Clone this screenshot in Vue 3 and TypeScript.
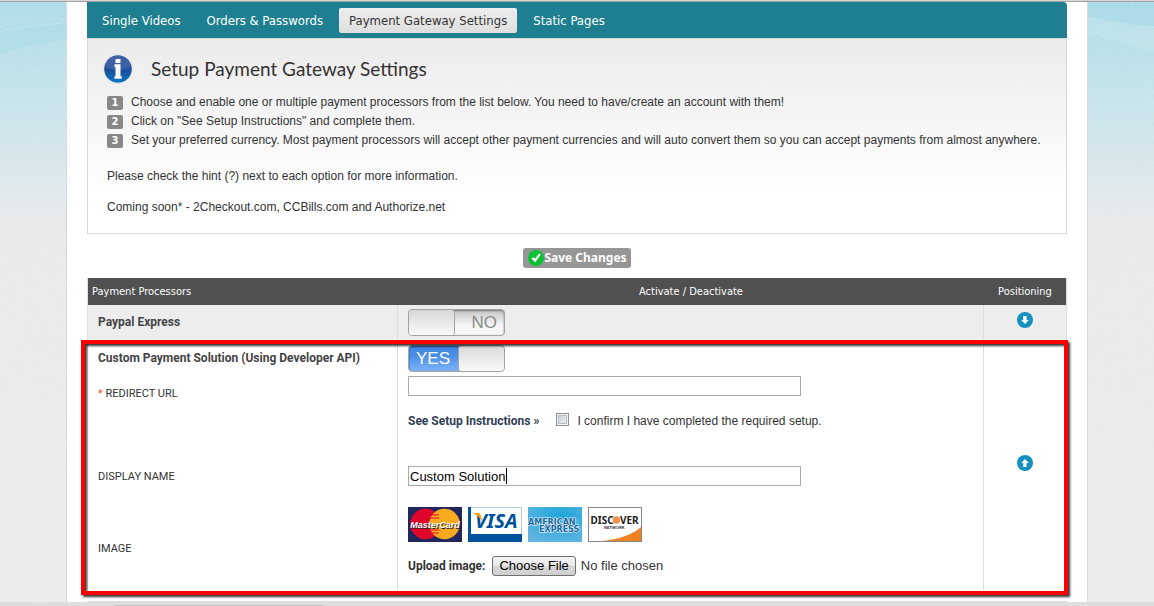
<script setup lang="ts">
import { ref } from 'vue'

const tabs = ['Single Videos', 'Orders & Passwords', 'Payment Gateway Settings', 'Static Pages']
const activeTab = ref('Payment Gateway Settings')

const steps = [
  'Choose and enable one or multiple payment processors from the list below. You need to have/create an account with them!',
  'Click on "See Setup Instructions" and complete them.',
  'Set your preferred currency. Most payment processors will accept other payment currencies and will auto convert them so you can accept payments from almost anywhere.',
]

const paypalEnabled = ref(false)
const customEnabled = ref(true)
const confirmed = ref(false)
const redirectUrl = ref('')
const displayName = ref('Custom Solution')
</script>

<template>
  <div class="screen">
    <svg class="backdrop" aria-hidden="true" width="100%" height="100%">
      <defs>
        <linearGradient id="sky" x1="0" y1="0" x2="0" y2="1">
          <stop offset="0" stop-color="#a9dbe7" />
          <stop offset="0.1" stop-color="#bbe0e9" />
          <stop offset="0.25" stop-color="#d2e5ea" />
          <stop offset="0.37" stop-color="#e9e9eb" />
          <stop offset="1" stop-color="#ebebeb" />
        </linearGradient>
        <filter id="grain" x="0" y="0" width="100%" height="100%">
          <feTurbulence type="fractalNoise" baseFrequency="0.6" numOctaves="2" />
          <feColorMatrix values="0 0 0 0 1  0 0 0 0 1  0 0 0 0 1  1.4 0 0 0 -0.45" />
        </filter>
      </defs>
      <rect width="100%" height="100%" fill="url(#sky)" />
      <path d="M0 28 Q34 22 67 19 V38 Q34 43 0 53Z" fill="#9fd8e3" opacity=".35" />
      <path d="M0 29 Q34 23 67 20 V22 Q34 25 0 31Z" fill="#fff" opacity=".15" />
      <svg x="100%" overflow="visible">
        <path d="M-67 15 Q-30 24 0 25 V50 Q-30 42 -67 33Z" fill="#fff" opacity=".12" />
        <path d="M-67 2 H0 V25 Q-30 24 -67 15Z" fill="#9fd8e6" opacity=".4" />
      </svg>
      <rect width="100%" height="100%" filter="url(#grain)" opacity=".25" />
    </svg>

    <main class="page">
      <nav class="tabs">
        <a
          v-for="tab in tabs"
          :key="tab"
          href="#"
          :class="{ active: tab === activeTab }"
          @click.prevent="activeTab = tab"
          >{{ tab }}</a
        >
      </nav>

      <section class="intro">
        <header>
          <svg class="info" viewBox="0 0 30 30" aria-hidden="true">
            <defs>
              <linearGradient id="blue" x1="0" y1="0" x2="0" y2="1">
                <stop offset="0" stop-color="#2b4d9a" />
                <stop offset="0.5" stop-color="#1a4a98" />
                <stop offset="1" stop-color="#0878c0" />
              </linearGradient>
            </defs>
            <circle cx="15" cy="15" r="14.7" fill="#fff" stroke="#d8d8d8" stroke-width=".6" />
            <circle cx="15" cy="15" r="13.8" fill="url(#blue)" />
            <path d="M2 11 A13.6 13.6 0 0 1 28 11 Q27 16 15 16 Q3 16 2 11Z" fill="#fff" opacity=".12" />
            <path d="M12.5 5h5v4h-5zM11.5 10.3h6v12h1.2v2.4h-7.2v-2.4h1v-9.4h-1z" fill="#fff" />
          </svg>
          <h1>Setup Payment Gateway Settings</h1>
        </header>
        <ol>
          <li v-for="(step, i) in steps" :key="i">
            <span class="num">{{ i + 1 }}</span>
            <span>{{ step }}</span>
          </li>
        </ol>
        <p>Please check the hint (?) next to each option for more information.</p>
        <p>Coming soon* - 2Checkout.com, CCBills.com and Authorize.net</p>
      </section>

      <div class="actions">
        <button type="button" class="save">
          <svg viewBox="0 0 16 16" aria-hidden="true">
            <circle cx="8" cy="8" r="8" fill="#0bc236" />
            <path d="M3.4 8.4 5.8 7.2 7 8.8 11 3.6 12.8 4.6 7.3 12.2Z" fill="#fff" />
          </svg>
          <span>Save Changes</span>
        </button>
      </div>

      <div class="processors">
        <table>
          <colgroup>
            <col class="col-name" />
            <col />
            <col class="col-pos" />
          </colgroup>
          <thead>
            <tr>
              <th class="first">Payment Processors</th>
              <th>Activate / Deactivate</th>
              <th>Positioning</th>
            </tr>
          </thead>
          <tbody>
            <tr class="shaded">
              <td class="name">Paypal Express</td>
              <td>
                <label class="switch" :class="{ on: paypalEnabled }">
                  <input v-model="paypalEnabled" type="checkbox" aria-label="Paypal Express" />
                  <span class="state">{{ paypalEnabled ? 'YES' : 'NO' }}</span>
                  <span class="knob"></span>
                </label>
              </td>
              <td class="pos">
                <button type="button" class="move" aria-label="Move down">
                  <svg viewBox="0 0 16 16"><circle cx="8" cy="8" r="8" fill="#1691bd" /><path d="M6.2 4h3.4v4h2.2L8 12 4.2 8h2z" fill="#fff" /></svg>
                </button>
              </td>
            </tr>
            <tr class="row-title">
              <td class="name">Custom Payment Solution (Using Developer API)</td>
              <td>
                <label class="switch" :class="{ on: customEnabled }">
                  <input v-model="customEnabled" type="checkbox" aria-label="Custom Payment Solution" />
                  <span class="state">{{ customEnabled ? 'YES' : 'NO' }}</span>
                  <span class="knob"></span>
                </label>
              </td>
              <td class="pos" rowspan="4">
                <button type="button" class="move" aria-label="Move up">
                  <svg viewBox="0 0 16 16"><circle cx="8" cy="8" r="8" fill="#1691bd" /><path d="M6.2 12h3.4V8h2.2L8 4 4.2 8h2z" fill="#fff" /></svg>
                </button>
              </td>
            </tr>
            <tr class="row-url">
              <td><label class="caption" for="redirect"><em>*</em> REDIRECT URL</label></td>
              <td>
                <input id="redirect" v-model="redirectUrl" class="text" type="text" />
                <div class="confirm">
                  <a href="#">See Setup Instructions »</a>
                  <input id="confirm" v-model="confirmed" type="checkbox" />
                  <label for="confirm">I confirm I have completed the required setup.</label>
                </div>
              </td>
            </tr>
            <tr class="row-display">
              <td><label class="caption" for="display">DISPLAY NAME</label></td>
              <td>
                <div class="field">
                  <input id="display" v-model="displayName" class="text" type="text" />
                  <span class="caret"></span>
                </div>
              </td>
            </tr>
            <tr class="row-image">
              <td><span class="caption">IMAGE</span></td>
              <td class="media">
                <div class="cards">
                  <svg viewBox="0 0 54 35" role="img" aria-label="MasterCard">
                    <rect width="54" height="35" fill="#22265f" />
                    <circle cx="17.5" cy="17" r="15.3" fill="#e0062b" />
                    <circle cx="36.5" cy="17" r="15.3" fill="#f9ab20" />
                    <path d="M23 8h8M22 11h9M22 23h9M23 26h8" stroke="#e0062b" stroke-width="1.2" />
                    <text x="3" y="21.6" class="mc-shadow">MasterCard</text>
                    <text x="2.2" y="21" class="mc">MasterCard</text>
                  </svg>
                  <svg viewBox="0 0 54 35" role="img" aria-label="Visa">
                    <rect x=".5" y=".5" width="53" height="34" fill="#fff" stroke="#b7c9dd" />
                    <path d="M0 0h3v27h51v8H0z" fill="#00529c" />
                    <text x="7" y="21" class="visa">VISA</text>
                    <path d="M5 6h5.5q2 .3 2.5 3l1.5 6Q11 9 5 6z" fill="#f9a01b" />
                  </svg>
                  <svg viewBox="0 0 54 35" role="img" aria-label="American Express">
                    <defs>
                      <radialGradient id="amex" cx=".6" cy=".3" r=".8">
                        <stop offset="0" stop-color="#1ba5da" />
                        <stop offset="1" stop-color="#64b5e2" />
                      </radialGradient>
                    </defs>
                    <rect width="54" height="35" fill="url(#amex)" />
                    <path d="M0 18V12H51V18M11 20H54V25H11Z" fill="#5fbce5" opacity=".6" />
                    <text x="0" y="17.5" class="amex">AMERICAN</text>
                    <text x="11" y="25" class="amex">EXPRESS</text>
                  </svg>
                  <svg viewBox="0 0 54 35" role="img" aria-label="Discover">
                    <rect x=".5" y=".5" width="53" height="34" fill="#fff" stroke="#85888b" />
                    <path d="M14 34Q41 31 53 20V34Z" fill="#f08122" />
                    <text x="2.5" y="16.5" class="disc">DISC</text>
                    <circle cx="28.5" cy="13" r="3.8" fill="#f6904a" />
                    <text x="32" y="16.5" class="disc">VER</text>
                    <text x="16" y="22" class="net">NETWORK</text>
                  </svg>
                </div>
                <div class="upload">
                  <label for="file">Upload image:</label>
                  <input id="file" type="file" />
                </div>
              </td>
            </tr>
          </tbody>
        </table>
        <div class="highlight"></div>
      </div>
      <hr />
    </main>
    <footer class="status"><span></span></footer>
  </div>
</template>

<style>
html,
body {
  margin: 0;
  background: #ebebeb;
}
</style>

<style scoped>
.screen {
  position: relative;
  display: flex;
  flex-direction: column;
  align-items: center;
  box-sizing: border-box;
  min-height: 100vh;
  border-top: 1px solid #d6d6d6;
  color: #333;
  font: 12px/19px 'Liberation Sans', Arial, sans-serif;
  overflow: hidden;
}
.screen::before {
  content: '';
  position: relative;
  z-index: 2;
  width: 100%;
  height: 1px;
  background: #a3a3a3;
}
.backdrop {
  position: absolute;
  inset: 0;
}
.page {
  position: relative;
  flex: 1;
  box-sizing: border-box;
  width: 100%;
  max-width: 1022px;
  padding: 0 20px;
  border: solid #d9dadb;
  border-width: 0 1px;
  background: #fff;
}
.tabs {
  display: flex;
  gap: 6px;
  align-items: center;
  height: 36px;
  padding: 0 5px;
  border-radius: 0 4px 0 0;
  background: #1d7f8f;
}
.tabs a {
  padding: 0 10px;
  border-radius: 2px;
  color: #fff;
  font: 13px/25px 'DejaVu Sans Condensed', 'DejaVu Sans', sans-serif;
  text-decoration: none;
}
.tabs a.active {
  background: linear-gradient(#eee, #dedede);
  color: #333;
}
.intro {
  box-sizing: border-box;
  min-height: 196px;
  padding: 13px 8px 16px 19px;
  border: 1px solid #d9d9d9;
  background: linear-gradient(#ebebeb, #fff 80%);
}
.intro header {
  display: flex;
  gap: 18px;
  align-items: center;
  margin-left: -4px;
}
.info {
  width: 30px;
  height: 30px;
}
h1 {
  margin: 0;
  font: 19px/34px Lato, 'Noto Sans', sans-serif;
}
ol {
  margin: 7px 0 17px;
  padding: 0;
  list-style: none;
}
li {
  display: flex;
  gap: 8px;
  align-items: center;
}
.num {
  width: 16px;
  border-radius: 2px;
  background: #888;
  color: #fff;
  font: bold 10px/14px 'DejaVu Sans', sans-serif;
  text-align: center;
}
.intro p {
  margin: 0;
}
.intro p + p {
  margin-top: 12px;
}
.actions {
  display: flex;
  justify-content: center;
  padding: 14px 0 10px;
}
.save {
  display: flex;
  align-items: center;
  height: 20px;
  padding: 0 4px 0 5px;
  border: 0;
  border-radius: 3px;
  background: #969696;
  color: #fff;
  font: bold 12px/20px 'Noto Sans', sans-serif;
}
.save svg {
  width: 16px;
  height: 16px;
}
.processors {
  position: relative;
}
table {
  width: 100%;
  border-collapse: separate;
  border-spacing: 0;
  table-layout: fixed;
  border: solid #ddd;
  border-width: 0 1px;
}
.col-name {
  width: 310px;
}
.col-pos {
  width: 82px;
}
th {
  height: 27px;
  padding: 0;
  background: #505050;
  color: #fff;
  font: 11px/27px 'DejaVu Sans Condensed', 'DejaVu Sans', sans-serif;
}
th.first {
  padding-left: 4px;
  text-align: left;
}
td {
  padding: 0 10px;
  border-right: 1px solid #ddd;
}
td.pos {
  padding: 0;
  border-right: 0;
  text-align: center;
}
.shaded td {
  height: 37px;
  padding-bottom: 2px;
  box-sizing: border-box;
  background: #ededed;
}
.name {
  color: #444;
  font-family: Roboto, sans-serif;
  font-weight: bold;
}
.row-title td {
  height: 32px;
}
.row-url td {
  height: 72px;
  vertical-align: top;
}
.row-url .caption {
  display: block;
  margin-top: 10px;
}
.row-display td {
  height: 60px;
}
.row-image td {
  height: 84px;
}
.row-image .media {
  vertical-align: top;
}
.caption {
  font: 11px/19px Roboto, sans-serif;
}
.caption em {
  color: #f4503c;
  font-style: normal;
}
.switch {
  position: relative;
  display: flex;
  justify-content: flex-end;
  align-items: center;
  box-sizing: border-box;
  width: 97px;
  height: 27px;
  padding: 0 7px;
  border: 1px solid #a2a2a2;
  border-radius: 4px;
  background: linear-gradient(#c4c4c4, #f6f6f6 60%);
  box-shadow: inset 0 1px 2px #777;
  color: #8b8b8b;
  font-size: 17px;
}
.switch input {
  position: absolute;
  inset: 0;
  margin: 0;
  opacity: 0;
}
.knob {
  position: absolute;
  top: 0;
  bottom: 0;
  left: 0;
  width: 45px;
  border-right: 1px solid #a5a5a5;
  border-radius: 3px;
  background: linear-gradient(#d8d8d8, #fafafa);
  pointer-events: none;
}
.switch.on {
  justify-content: flex-start;
  background: linear-gradient(#4384dc, #4b8fe6 40%, #7eb4fb);
  box-shadow: inset 0 1px 2px #255ca9;
  color: #fff;
}
.switch.on .knob {
  right: 0;
  left: auto;
  border-right: 0;
  border-left: 1px solid #a5a5a5;
}
.move {
  display: inline-block;
  width: 16px;
  height: 16px;
  padding: 0;
  border: 0;
  background: none;
  vertical-align: middle;
}
.move svg {
  display: block;
}
.shaded .move,
.row-title .move {
  margin-bottom: 6px;
}
.text {
  display: block;
  box-sizing: border-box;
  width: 393px;
  max-width: 100%;
  height: 20px;
  padding: 0 1px;
  border: 1px solid #a9a9ae;
  background: #fff;
  color: #000;
  font: 13px/18px 'Liberation Sans', Arial, sans-serif;
  outline: none;
}
.row-url .text {
  margin-top: 2px;
}
.field {
  position: relative;
}
.caret {
  position: absolute;
  top: 2px;
  left: 98px;
  width: 1px;
  height: 16px;
  background: #000;
}
.confirm {
  display: flex;
  align-items: center;
  margin-top: 16px;
}
.confirm a {
  color: #2f3f55;
  font-family: Roboto, sans-serif;
  font-weight: bold;
  text-decoration: none;
}
.confirm input {
  appearance: none;
  width: 13px;
  height: 13px;
  margin: 0 8px 4px 17px;
  border: 1px solid #8e8f8f;
  background: linear-gradient(135deg, #c5c9d0, #f4f4f4);
  box-shadow: inset 0 0 0 1px #f4f4f4, inset 0 0 0 2px #b8bcc4;
}
.confirm input:checked {
  background: #1d7f8f;
}
.cards {
  display: flex;
  gap: 6px;
  padding-top: 1px;
}
.cards svg {
  width: 54px;
  height: 35px;
}
.mc,
.mc-shadow {
  font: italic bold 9px 'Liberation Sans', sans-serif;
  fill: #fff;
}
.mc-shadow {
  fill: #222;
}
.visa {
  font: italic bold 20px 'Noto Sans', sans-serif;
  fill: #00529c;
}
.amex {
  font: bold 8px 'DejaVu Sans', sans-serif;
  fill: #17699f;
  stroke: #fff;
  stroke-width: 1px;
  paint-order: stroke;
}
.disc {
  font: bold 10px 'Noto Sans', sans-serif;
  fill: #222;
}
.net {
  font: bold 4px 'Liberation Sans', sans-serif;
  fill: #333;
}
.upload {
  display: flex;
  gap: 7px;
  align-items: center;
  margin-top: 14px;
  font-family: Roboto, sans-serif;
  font-weight: bold;
}
.upload input {
  color: #333;
  font: 13px/18px 'Liberation Sans', Arial, sans-serif;
}
.upload input::file-selector-button {
  height: 20px;
  margin: 0 5px 0 0;
  padding: 0 6px;
  border: 1px solid #707070;
  border-radius: 3px;
  background: linear-gradient(#f4f4f4, #e9e9e9 50%, #d8d8d8 51%, #cfcfcf);
  color: #000;
  font: 13px/18px 'Liberation Sans', Arial, sans-serif;
}
.highlight {
  position: absolute;
  top: 62px;
  right: -1px;
  bottom: -5px;
  left: -6px;
  border: 4px solid #f00;
  filter: drop-shadow(2px 2px 1px rgba(0, 0, 0, 0.8));
  pointer-events: none;
}
hr {
  height: 1px;
  margin: 11px 0 0;
  border: 0;
  background: #ddd;
}
.status {
  position: relative;
  z-index: 1;
  box-sizing: border-box;
  width: 100%;
  height: 4px;
  padding-top: 3px;
  background: #dedede;
}
.status span {
  display: block;
  width: 18%;
  height: 1px;
  margin-left: 10%;
  background: #c4c4c4;
}
</style>
